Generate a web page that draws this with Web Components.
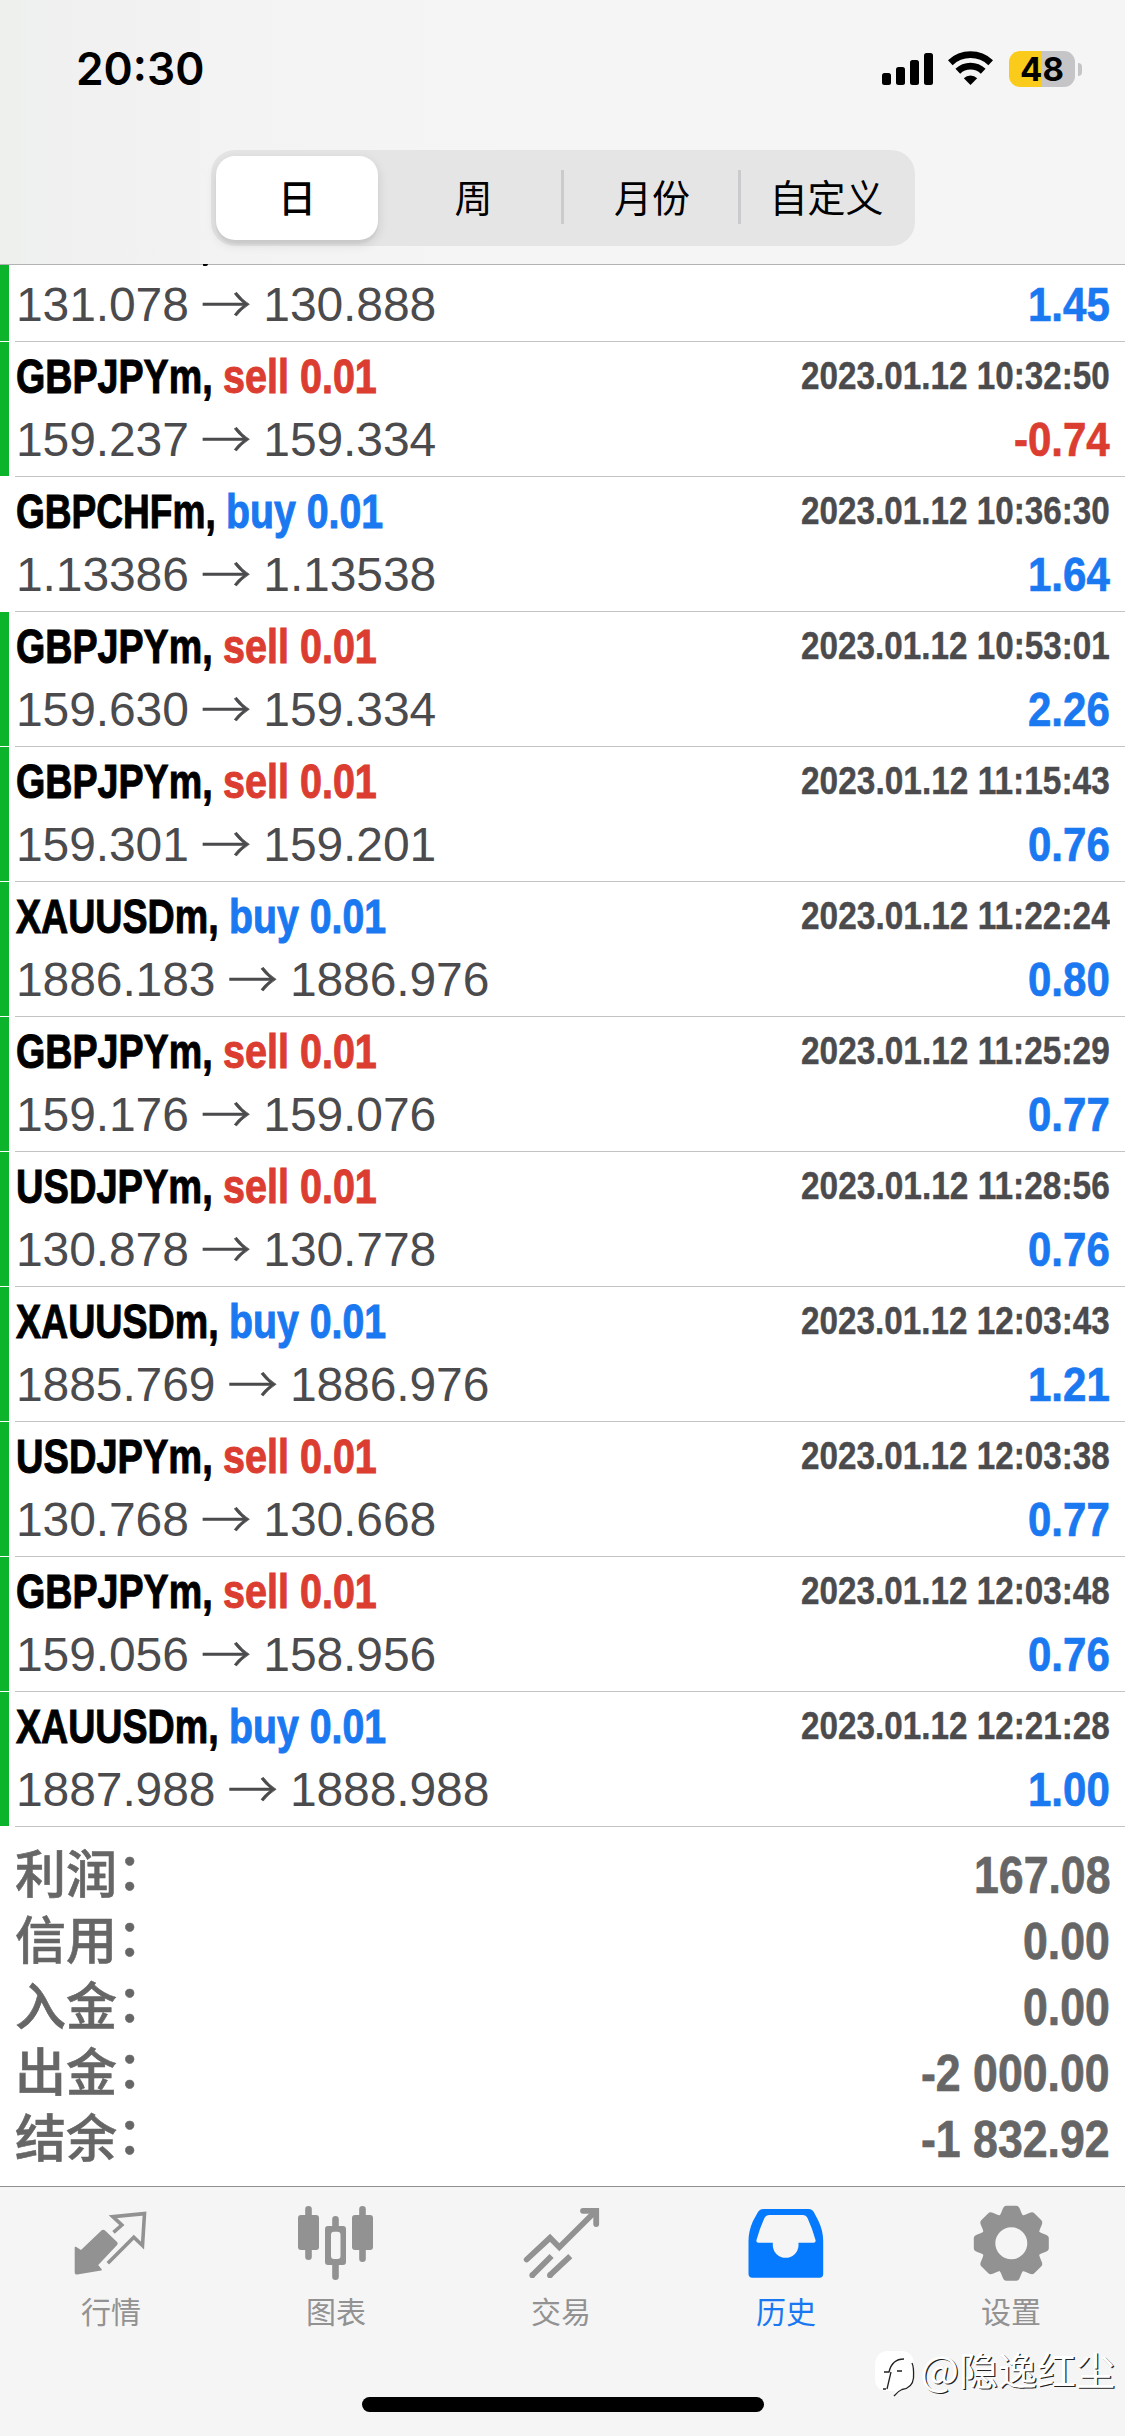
<!DOCTYPE html>
<html lang="zh-CN">
<head>
<meta charset="utf-8">
<title>历史</title>
<style>
html,body{margin:0;padding:0;background:#fff}
body{width:1125px;height:2436px;overflow:hidden;font-family:"Liberation Sans","Noto Sans CJK SC",sans-serif}
</style>
</head>
<body>
<history-app></history-app>
<script>
const define = (name, html, setup) => {
  const t = document.createElement('template');
  t.innerHTML = html;
  customElements.define(name, class extends HTMLElement {
    connectedCallback() {
      if (this.shadowRoot) return;
      this.attachShadow({mode: 'open'}).append(t.content.cloneNode(true));
      if (setup) setup(this, this.shadowRoot);
    }
  });
};

/* Text condensed horizontally to an exact advance width. */
define('fit-text', `<style>
:host{display:inline-block;white-space:pre;text-align:left}
span{display:inline-block;transform-origin:0 50%}
</style><span><slot></slot></span>`, (el, root) => {
  const s = root.querySelector('span');
  const natural = s.offsetWidth;
  const w = el.hasAttribute('width') ? +el.getAttribute('width') : natural * +el.getAttribute('ratio');
  el.style.width = w + 'px';
  s.style.width = natural + 'px';
  s.style.transform = `scaleX(${w / natural})`;
});

define('status-bar', `<style>
:host{display:flex;justify-content:space-between;align-items:center;height:138px;padding:0 43px 0 76px;box-sizing:border-box}
.time{font:600 45px/60px Inter,sans-serif;color:#000}
svg{display:block}
.right{display:flex;align-items:center}
.bat{display:flex;align-items:center;justify-content:center;width:66px;height:36px;border-radius:11px;margin-left:16px;
background:linear-gradient(90deg,#fbcb1c 32px,#c5c5c7 32px);font:700 33px/36px Inter,sans-serif;color:#000}
.cap{width:4px;height:13px;margin-left:3px;border-radius:0 5px 5px 0;background:#c5c5c7}
</style>
<div class="time"><fit-text width="128">20:30</fit-text></div>
<div class="right">
<svg width="51" height="36" viewBox="0 0 51 36"><rect x="0" y="22" width="9" height="12" rx="2.5"/><rect x="14" y="16" width="9" height="18" rx="2.5"/><rect x="28" y="9" width="9" height="25" rx="2.5"/><rect x="42" y="2" width="9" height="32" rx="2.5"/></svg>
<svg style="margin-left:15px" width="45" height="36" viewBox="0 0 45 36"><g fill="none" stroke="#000" stroke-width="6.8"><path d="M2.3 11.7A29.5 29.5 0 0 1 42.7 11.7"/><path d="M9.8 20.2A18.3 18.3 0 0 1 35.2 20.2"/></g><path d="M22.5 34L15.8 27.2A9.6 9.6 0 0 1 29.2 27.2Z"/></svg>
<div class="bat"><span>48</span></div><div class="cap"></div>
</div>`);

define('period-tabs', `<style>
:host{display:grid;grid-template-columns:176px 175px 177px 176px;width:704px;height:96px;margin:12px 0 0 211px;border-radius:24px;background:#e5e5e6;
font:400 38px/92px "Noto Sans CJK SC",sans-serif;color:#000;text-align:center}
div{display:flex;align-items:center;justify-content:center;height:92px}
.on{margin:6px 9px 6px 5px;height:84px;background:#fff;border-radius:19px;font-weight:500;box-shadow:0 4px 12px rgba(0,0,0,.12),0 4px 2px rgba(0,0,0,.04)}
.on span{margin-top:-4px}
.line{background:linear-gradient(#cbcbcd,#cbcbcd) 0 20px/3px 54px no-repeat;margin-left:-1px}
</style><div class="on"><span>日</span></div><div style="padding-right:2px">周</div><div class="line" style="padding-left:4px">月份</div><div class="line">自定义</div>`);

define('deal-row', `<style>
:host{display:flex;height:135px;box-sizing:border-box;background:linear-gradient(#c3c3c5,#c3c3c5) 15px 134px/1110px 1px no-repeat}
:host([first]){height:77px;background-position:15px 76px}
.bar{width:9px;height:134px;flex:none}
:host([green]) .bar{background:#0bb42b}
:host([first]) .bar{height:76px}
.body{flex:1;padding:3px 15px 0 7px}
:host([first]) .body{padding-top:0;margin-top:-1px}
:host([first]) .body .l:first-child{display:none}
.l{display:flex;justify-content:space-between;height:63px;font-size:48px;line-height:63px;white-space:pre}
:host([first]) .l{height:78px;line-height:81px}
.t{font-weight:700;color:#000;-webkit-text-stroke:1px currentColor}
.sell{color:#dc3d31}.buy{color:#1a78f0}
.d{font-size:38px;font-weight:700;color:#4b4b4e;-webkit-text-stroke:.4px currentColor}
.p{color:#4b4b4e;letter-spacing:-.1px}
.a{display:inline-flex;justify-content:center;width:48px;font-family:"Noto Sans CJK SC",sans-serif;font-size:50px;font-weight:300;line-height:1;vertical-align:-2px;-webkit-text-stroke:.7px currentColor}
.v{font-weight:700;-webkit-text-stroke:.7px currentColor;margin-right:1px}
</style><div class="bar"></div><div class="body"></div>`, (el, root) => {
  const [sym, side, date, from, to, val] = el.getAttribute('data').split('|');
  const w = {GBPJPYm: 207, USDJPYm: 207, GBPCHFm: 210, XAUUSDm: 213}[sym];
  const top = sym ? `<div class="l"><span class="t"><fit-text width="${w}">${sym}, </fit-text><fit-text class="${side}" width="${side === 'buy' ? 157 : 154}">${side} 0.01</fit-text></span><fit-text class="d" width="309">${date}</fit-text></div>` : '<div class="l"></div>';
  root.querySelector('.body').innerHTML = top +
    `<div class="l"><span class="p">${from} <span class="a">→</span> ${to}</span><fit-text class="v ${val < 0 ? 'sell' : 'buy'}" ratio=".875">${val}</fit-text></div>`;
});

define('sum-row', `<style>
:host{display:flex;justify-content:space-between;height:66px;padding:0 15px;line-height:66px;font-weight:700;color:#666;font-size:51px}
.k{font-weight:500;-webkit-text-stroke:.6px currentColor}
.k,fit-text{height:66px}
fit-text{-webkit-text-stroke:.7px currentColor}
.c{display:inline-block;line-height:60px;vertical-align:3px}
</style><span class="k"><slot></slot><span class="c">：</span></span>`, (el, root) => {
  const f = document.createElement('fit-text');
  f.setAttribute('ratio', '.875');
  f.textContent = el.getAttribute('value');
  root.append(f);
});

define('tab-item', `<style>
:host{display:flex;flex-direction:column;align-items:center;flex:1;color:#929292;font:400 30px/40px "Noto Sans CJK SC",sans-serif}
:host([active]){color:#1877f2}
::slotted(svg){display:block;width:90px;height:90px}
</style><slot name="icon"></slot><span><slot></slot></span>`);

define('tab-bar', `<style>
:host{display:flex;flex-direction:column;height:250px;box-sizing:border-box;border-top:1px solid #909092;background:#f5f5f5}
.tabs{display:flex;margin:0 1.5px 0 -1.5px;padding:13px 0 0;height:210px;box-sizing:border-box}
.home{width:402px;height:15px;border-radius:8px;background:#000;margin-left:362px}
</style>
<div class="tabs">
<tab-item><svg slot="icon" viewBox="-.5 0 90 90"><path d="M9 47.5L14.5 51L35.5 31Q36.8 30 38 31L50 42.5Q50.8 43.6 50 44.5L30.7 65L34.5 69.8L10.5 73.8Q9 73.8 9 72Z" fill="currentColor" stroke="currentColor" stroke-width="1.6" stroke-linejoin="round"/><path d="M47 32.3L55.3 25L46.3 16.6L78 13.6L76 45.5L67.3 37.2L41.3 63.3" fill="none" stroke="currentColor" stroke-width="3.6"/></svg>行情</tab-item>
<tab-item><svg slot="icon" viewBox="0 0 90 90" fill="currentColor"><rect x="7" y="15" width="21" height="35" rx="3"/><rect x="14.2" y="6" width="6.6" height="54" rx="3.3"/><rect x="61" y="15" width="21" height="35" rx="3"/><rect x="68.2" y="6" width="6.6" height="56" rx="3.3"/><path fill-rule="evenodd" d="M37 26H52Q55 26 55 29V62Q55 65 52 65H37Q34 65 34 62V29Q34 26 37 26ZM43 31.7Q40 31.7 40 35V56Q40 59 43 59H46.5Q49.5 59 49.5 56V35Q49.5 31.7 46.5 31.7Z"/><path d="M41.2 28V19.3a3.3 3.3 0 0 1 6.6 0V28ZM41.2 63V76.7a3.3 3.3 0 0 0 6.6 0V63Z"/></svg>图表</tab-item>
<tab-item><svg slot="icon" viewBox="0 0 90 90" fill="none" stroke="currentColor" stroke-width="5.8"><path d="M10.7 59.5L34 37.8L43.3 47.2L79.5 11.3" stroke-linecap="round"/><path d="M67 10.8H80.2V24" stroke-linecap="round"/><path d="M16.3 75.2L35.6 56M34 75.2L54.3 56.2"/><g fill="currentColor" stroke="none"><circle cx="16.3" cy="75.2" r="2.9"/><circle cx="34" cy="75.2" r="2.9"/></g></svg>交易</tab-item>
<tab-item active><svg slot="icon" viewBox=".5 0 90 90"><path fill="#067aff" fill-rule="evenodd" d="M23 9H68Q71.5 9 73.3 12L78 21Q82.7 31 82.7 41V74Q82.7 77.7 79 77.7H12Q8 77.7 8 74V41Q8 31 12.5 21L17.5 12Q19.3 9 23 9ZM29 15Q25.5 15 24 18Q19 29 16 40Q15.3 42.7 18 42.7H32.3V46A12.9 13 0 0 0 58 46V42.7H73Q75.7 42.7 75 40Q72 29 67 18Q65.5 15 62 15Z"/></svg>历史</tab-item>
<tab-item><svg slot="icon" viewBox="0 0 90 90" fill="currentColor"><defs><path id="t" d="M-12.5 -26Q-10 -30 -8.7 -34Q-7.5 -37.5 -5 -37.5H5Q7.5 -37.5 8.7 -34Q10 -30 12.5 -26Z"/></defs><g transform="translate(45.3 43.3)"><circle r="23" fill="none" stroke="currentColor" stroke-width="14"/><use href="#t"/><use href="#t" transform="rotate(45)"/><use href="#t" transform="rotate(90)"/><use href="#t" transform="rotate(135)"/><use href="#t" transform="rotate(180)"/><use href="#t" transform="rotate(225)"/><use href="#t" transform="rotate(270)"/><use href="#t" transform="rotate(315)"/></g></svg>设置</tab-item>
</div><div class="home"></div>`);

define('water-mark', `<style>
:host{position:absolute;right:10px;top:2341px;display:flex;align-items:center;height:54px;color:#fff;font:400 39px/54px "Noto Sans CJK SC",sans-serif;text-shadow:1.2px 1.2px .6px #222}
svg{margin-right:4px;margin-top:13px}
.at{font-size:41px}
</style><svg width="42" height="48" viewBox="0 0 42 48"><path fill="#fff" d="M13 0H28Q40 1 40 14V27Q39 39 27 40L20 46L21 40H12Q1 39 1 27V13Q2 1 13 0Z"/><path fill="none" stroke="#222" stroke-width="1.3" d="M38 12Q40 16 39.5 27Q38.5 37 28 38.5Q24 40 20 45M10 21H15Q18 8 30 8M17 21L13 38M12 38H9M23 20H28"/></svg><span class="at">@</span><span>隐逸红尘</span>`);

const deals = [
 ['green first', '||', '131.078|130.888|1.45'],
 ['green', 'GBPJPYm|sell|2023.01.12 10:32:50', '159.237|159.334|-0.74'],
 ['', 'GBPCHFm|buy|2023.01.12 10:36:30', '1.13386|1.13538|1.64'],
 ['green', 'GBPJPYm|sell|2023.01.12 10:53:01', '159.630|159.334|2.26'],
 ['green', 'GBPJPYm|sell|2023.01.12 11:15:43', '159.301|159.201|0.76'],
 ['green', 'XAUUSDm|buy|2023.01.12 11:22:24', '1886.183|1886.976|0.80'],
 ['green', 'GBPJPYm|sell|2023.01.12 11:25:29', '159.176|159.076|0.77'],
 ['green', 'USDJPYm|sell|2023.01.12 11:28:56', '130.878|130.778|0.76'],
 ['green', 'XAUUSDm|buy|2023.01.12 12:03:43', '1885.769|1886.976|1.21'],
 ['green', 'USDJPYm|sell|2023.01.12 12:03:38', '130.768|130.668|0.77'],
 ['green', 'GBPJPYm|sell|2023.01.12 12:03:48', '159.056|158.956|0.76'],
 ['green', 'XAUUSDm|buy|2023.01.12 12:21:28', '1887.988|1888.988|1.00']
];

define('history-app', `<style>
:host{display:flex;flex-direction:column;width:1125px;height:2436px;position:relative;background:#fff}
header{height:265px;box-sizing:border-box;border-bottom:1px solid #b2b2b4;background:linear-gradient(90deg,#edf0ed 0,#f0f0f1 50px,#f4f3f4 230px,#f5f5f5 500px,#f5f5f6)}
.sum{flex:1;padding-top:16px;box-sizing:border-box;height:359px}
.tail{position:absolute;left:203px;top:264px;width:5px;height:2px;background:#000;border-radius:0 0 3px 1px}
</style><header><status-bar></status-bar><period-tabs></period-tabs></header>
<main>${deals.map(([a, b, c]) => `<deal-row ${a} data="${b}|${c}"></deal-row>`).join('')}</main>
<section class="sum"><sum-row value="167.08">利润</sum-row><sum-row value="0.00">信用</sum-row><sum-row value="0.00">入金</sum-row><sum-row value="-2 000.00">出金</sum-row><sum-row value="-1 832.92">结余</sum-row></section>
<tab-bar></tab-bar><water-mark></water-mark><div class="tail"></div>`);
</script>
</body>
</html>
